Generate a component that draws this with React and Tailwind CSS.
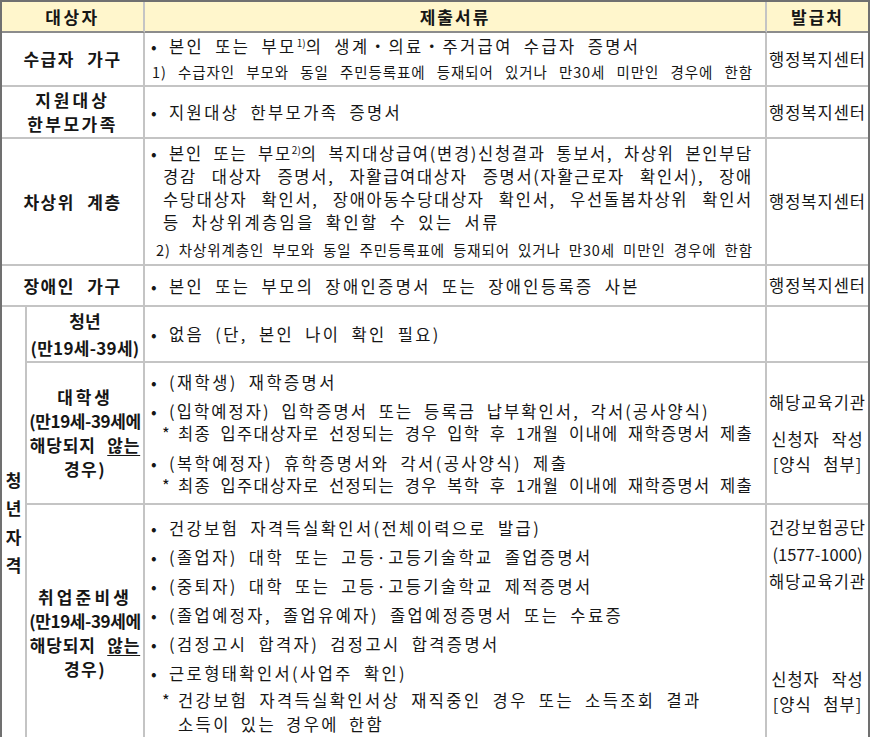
import React from "react";

const cellR = "border-r-2 border-[#c4c4c4]";
const cellB = "border-b-2 border-[#c4c4c4]";
const body = "text-[16.5px] tracking-[2.4px] [word-spacing:5px]";
const note = "text-[14.5px] tracking-[0.9px] [word-spacing:3px]";

function Dot() {
  return <span className="inline-block w-[18px] tracking-normal [word-spacing:0]">•</span>;
}

function Star() {
  return <span className="inline-block w-[16px] tracking-normal [word-spacing:0]">*</span>;
}

function Sup({ children }) {
  return <span className="align-[6px] text-[10px] leading-none tracking-normal [word-spacing:0]">{children}</span>;
}

function Line({ children, justify = false, className = "" }) {
  return (
    <div className={(justify ? "[text-align-last:justify] text-justify " : "") + "whitespace-nowrap " + className}>
      {children}
    </div>
  );
}

function Head({ children, className = "tracking-[1.5px]" }) {
  return (
    <div className={"whitespace-nowrap text-center text-[17px] font-bold leading-[24px] [word-spacing:7px] " + className}>
      {children}
    </div>
  );
}

function Issuer({ children, className = "tracking-[1px]" }) {
  return <div className={"whitespace-nowrap text-center text-[16.5px] [word-spacing:7px] " + className}>{children}</div>;
}

export default function App() {
  return (
    <div className="w-[870px] h-[737px] bg-white font-['Noto_Sans_CJK_KR','Noto_Sans',sans-serif] text-[#161616]">
      <div className="w-[870px] border-2 border-[#707070]">
        <table className="w-[866px] table-fixed border-separate border-spacing-0">
          <colgroup>
            <col className="w-[25px]" />
            <col className="w-[118px]" />
            <col className="w-[622px]" />
            <col className="w-[101px]" />
          </colgroup>
          <tbody className="text-[16.5px]">
            <tr className="h-[31px] bg-[#fff6cc]">
              <td colSpan={2} className="border-b-2 border-r-2 border-b-[#8c8c8c] border-r-[#c4c4c4] p-0">
                <Head className="text-[17.5px] tracking-[2.5px]">대상자</Head>
              </td>
              <td className="border-b-2 border-r-2 border-b-[#8c8c8c] border-r-[#c4c4c4] p-0">
                <Head className="text-[17.5px] tracking-[2px]">제출서류</Head>
              </td>
              <td className="border-b-2 border-b-[#8c8c8c] p-0">
                <Head className="text-[17.5px] tracking-[2px]">발급처</Head>
              </td>
            </tr>

            <tr className="h-[54px]">
              <td colSpan={2} className={cellR + " " + cellB + " p-0"}>
                <Head>수급자 가구</Head>
              </td>
              <td className={cellR + " " + cellB + " py-0 pl-[6px] pr-[12px]"}>
                <div className="flex flex-col gap-[4px]">
                  <Line className={"leading-[22px] " + body}>
                    <Dot />본인 또는 부모<Sup>1)</Sup>의 생계・의료・주거급여 수급자 증명서
                  </Line>
                  <Line justify className={"pl-[1px] leading-[22px] " + note}>
                    1) 수급자인 부모와 동일 주민등록표에 등재되어 있거나 만30세 미만인 경우에 한함
                  </Line>
                </div>
              </td>
              <td className={cellB + " p-0"}>
                <Issuer>행정복지센터</Issuer>
              </td>
            </tr>

            <tr className="h-[52px]">
              <td colSpan={2} className={cellR + " " + cellB + " p-0"}>
                <Head className="tracking-[3px]">지원대상</Head>
                <Head className="tracking-[2.5px]">한부모가족</Head>
              </td>
              <td className={cellR + " " + cellB + " py-0 pl-[6px] pr-[12px]"}>
                <Line className={"leading-[22px] " + body}>
                  <Dot />지원대상 한부모가족 증명서
                </Line>
              </td>
              <td className={cellB + " p-0"}>
                <Issuer>행정복지센터</Issuer>
              </td>
            </tr>

            <tr className="h-[127px]">
              <td colSpan={2} className={cellR + " " + cellB + " p-0"}>
                <Head>차상위 계층</Head>
              </td>
              <td className={cellR + " " + cellB + " py-0 pl-[6px] pr-[12px]"}>
                <div className="leading-[23px] tracking-[1.7px] [word-spacing:3px]">
                  <Line justify>
                    <Dot />본인 또는 부모<Sup>2)</Sup>의 복지대상급여(변경)신청결과 통보서, 차상위 본인부담
                  </Line>
                  <Line justify className="pl-[12px]">
                    경감 대상자 증명서, 자활급여대상자 증명서(자활근로자 확인서), 장애
                  </Line>
                  <Line justify className="pl-[12px]">
                    수당대상자 확인서, 장애아동수당대상자 확인서, 우선돌봄차상위 확인서
                  </Line>
                  <Line className={"pl-[12px] " + body}>등 차상위계층임을 확인할 수 있는 서류</Line>
                </div>
                <Line justify className={"mt-[4px] pl-[5px] leading-[23px] " + note}>
                  2) 차상위계층인 부모와 동일 주민등록표에 등재되어 있거나 만30세 미만인 경우에 한함
                </Line>
              </td>
              <td className={cellB + " p-0"}>
                <Issuer>행정복지센터</Issuer>
              </td>
            </tr>

            <tr className="h-[41px]">
              <td colSpan={2} className={cellR + " " + cellB + " p-0"}>
                <Head>장애인 가구</Head>
              </td>
              <td className={cellR + " " + cellB + " py-0 pl-[6px] pr-[12px]"}>
                <Line className={"leading-[22px] " + body}>
                  <Dot />본인 또는 부모의 장애인증명서 또는 장애인등록증 사본
                </Line>
              </td>
              <td className={cellB + " p-0"}>
                <Issuer>행정복지센터</Issuer>
              </td>
            </tr>

            <tr className="h-[53px]">
              <td rowSpan={3} className={cellR + " p-0"}>
                <div className="flex flex-col items-center text-[17px] font-bold leading-[28.5px]">
                  <span>청</span>
                  <span>년</span>
                  <span>자</span>
                  <span>격</span>
                </div>
              </td>
              <td className={cellR + " " + cellB + " p-0"}>
                <Head className="leading-[27px] tracking-[0px]">청년</Head>
                <Head className="leading-[27px] tracking-[0.3px]">(만19세-39세)</Head>
              </td>
              <td className={cellR + " " + cellB + " py-0 pl-[6px] pr-[12px]"}>
                <Line className={"leading-[22px] " + body}>
                  <Dot />없음 (단, 본인 나이 확인 필요)
                </Line>
              </td>
              <td className={cellB + " p-0"} />
            </tr>

            <tr className="h-[142px]">
              <td className={cellR + " " + cellB + " p-0"}>
                <Head className="tracking-[2.8px]">대학생</Head>
                <Head className="tracking-[-0.4px] [word-spacing:0]">(만19세-39세에</Head>
                <Head className="tracking-[0.8px] [word-spacing:5px]">
                  해당되지 <span className="underline underline-offset-[3px]">않는</span>
                </Head>
                <Head>경우)</Head>
              </td>
              <td className={cellR + " " + cellB + " py-0 pl-[6px] pr-[12px]"}>
                <div className={"leading-[22px] " + body}>
                  <Line>
                    <Dot />(재학생) 재학증명서
                  </Line>
                  <Line className="mt-[7px] tracking-[2.1px]">
                    <Dot />(입학예정자) 입학증명서 또는 등록금 납부확인서, 각서(공사양식)
                  </Line>
                  <Line justify className="pl-[11px] tracking-[1.3px] [word-spacing:4px]">
                    <Star />최종 입주대상자로 선정되는 경우 입학 후 1개월 이내에 재학증명서 제출
                  </Line>
                  <Line className="mt-[8px]">
                    <Dot />(복학예정자) 휴학증명서와 각서(공사양식) 제출
                  </Line>
                  <Line justify className="pl-[11px] tracking-[1.3px] [word-spacing:4px]">
                    <Star />최종 입주대상자로 선정되는 경우 복학 후 1개월 이내에 재학증명서 제출
                  </Line>
                </div>
              </td>
              <td className={cellB + " p-0"}>
                <div className="leading-[25px]">
                  <Issuer>해당교육기관</Issuer>
                  <div className="mt-[12px]">
                    <Issuer>신청자 작성</Issuer>
                    <Issuer>[양식 첨부]</Issuer>
                  </div>
                </div>
              </td>
            </tr>

            <tr className="h-[233px]">
              <td className={cellR + " p-0"}>
                <div className="pt-[22px]">
                  <Head className="tracking-[3.2px]">취업준비생</Head>
                  <Head className="tracking-[-0.4px] [word-spacing:0]">(만19세-39세에</Head>
                  <Head className="tracking-[0.8px] [word-spacing:5px]">
                    해당되지 <span className="underline underline-offset-[3px]">않는</span>
                  </Head>
                  <Head>경우)</Head>
                </div>
              </td>
              <td className={cellR + " pt-[9px] pb-0 pl-[6px] pr-[12px] align-top"}>
                <div className={"leading-[29px] " + body}>
                  <Line>
                    <Dot />건강보험 자격득실확인서(전체이력으로 발급)
                  </Line>
                  <Line>
                    <Dot />(졸업자) 대학 또는 고등·고등기술학교 졸업증명서
                  </Line>
                  <Line>
                    <Dot />(중퇴자) 대학 또는 고등·고등기술학교 제적증명서
                  </Line>
                  <Line>
                    <Dot />(졸업예정자, 졸업유예자) 졸업예정증명서 또는 수료증
                  </Line>
                  <Line>
                    <Dot />(검정고시 합격자) 검정고시 합격증명서
                  </Line>
                  <Line>
                    <Dot />근로형태확인서(사업주 확인)
                  </Line>
                </div>
                <div className={"leading-[24px] " + body}>
                  <Line className="pl-[11px]">
                    <Star />건강보험 자격득실확인서상 재직중인 경우 또는 소득조회 결과
                  </Line>
                  <Line className="pl-[27px] [word-spacing:4px]">소득이 있는 경우에 한함</Line>
                </div>
              </td>
              <td className="pt-[9px] pb-0 px-0 align-top">
                <div className="leading-[27px]">
                  <Issuer>건강보험공단</Issuer>
                  <Issuer className="tracking-[0px]">(1577-1000)</Issuer>
                  <Issuer>해당교육기관</Issuer>
                </div>
                <div className="mt-[72px] leading-[25px]">
                  <Issuer>신청자 작성</Issuer>
                  <Issuer>[양식 첨부]</Issuer>
                </div>
              </td>
            </tr>
          </tbody>
        </table>
      </div>
    </div>
  );
}
